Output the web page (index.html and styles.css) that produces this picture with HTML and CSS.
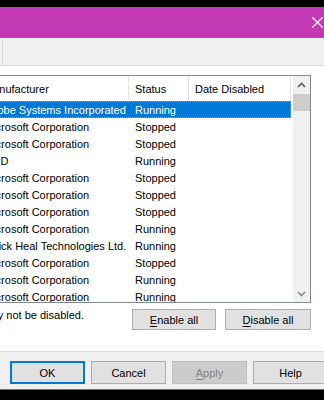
FILE: index.html
```html
<!DOCTYPE html>
<html lang="en">
<head>
  <meta charset="UTF-8">
  <title>System Configuration - Services</title>
  <link rel="stylesheet" href="styles.css">
</head>
<body>
  <div class="screen-edge"></div>

  <div class="titlebar">
    <div class="caption-btn">
      <svg width="11" height="11" viewBox="0 0 11 11">
        <path d="M0 0 L11 11 M11 0 L0 11" stroke="#ffffff" stroke-width="1.3" fill="none"/>
      </svg>
    </div>
  </div>

  <div class="dialog">
    <div class="tabs">
      <div class="tab"></div>
    </div>

    <div class="tab-page">
      <div class="service-list">
        <div class="list-view">
          <div class="list-row list-header">
            <div class="cell">Manufacturer</div>
            <div class="cell">Status</div>
            <div class="cell">Date Disabled</div>
          </div>
          <div class="list-row selected">
            <div class="cell">Adobe Systems Incorporated</div>
            <div class="cell">Running</div>
            <div class="cell"></div>
          </div>
          <div class="list-row">
            <div class="cell">Microsoft Corporation</div>
            <div class="cell">Stopped</div>
            <div class="cell"></div>
          </div>
          <div class="list-row">
            <div class="cell">Microsoft Corporation</div>
            <div class="cell">Stopped</div>
            <div class="cell"></div>
          </div>
          <div class="list-row">
            <div class="cell">AMD</div>
            <div class="cell">Running</div>
            <div class="cell"></div>
          </div>
          <div class="list-row">
            <div class="cell">Microsoft Corporation</div>
            <div class="cell">Stopped</div>
            <div class="cell"></div>
          </div>
          <div class="list-row">
            <div class="cell">Microsoft Corporation</div>
            <div class="cell">Stopped</div>
            <div class="cell"></div>
          </div>
          <div class="list-row">
            <div class="cell">Microsoft Corporation</div>
            <div class="cell">Stopped</div>
            <div class="cell"></div>
          </div>
          <div class="list-row">
            <div class="cell">Microsoft Corporation</div>
            <div class="cell">Running</div>
            <div class="cell"></div>
          </div>
          <div class="list-row">
            <div class="cell">Quick Heal Technologies Ltd.</div>
            <div class="cell">Running</div>
            <div class="cell"></div>
          </div>
          <div class="list-row">
            <div class="cell">Microsoft Corporation</div>
            <div class="cell">Stopped</div>
            <div class="cell"></div>
          </div>
          <div class="list-row">
            <div class="cell">Microsoft Corporation</div>
            <div class="cell">Running</div>
            <div class="cell"></div>
          </div>
          <div class="list-row">
            <div class="cell">Microsoft Corporation</div>
            <div class="cell">Running</div>
            <div class="cell"></div>
          </div>
        </div>

        <div class="scrollbar">
          <div class="scroll-btn">
            <svg width="9" height="6" viewBox="0 0 9 6"><path d="M1 5 L4.5 1.5 L8 5" stroke="#606060" stroke-width="1.6" fill="none"/></svg>
          </div>
          <div class="scroll-thumb"></div>
          <div class="scroll-track"></div>
          <div class="scroll-btn">
            <svg width="9" height="6" viewBox="0 0 9 6"><path d="M1 1 L4.5 4.5 L8 1" stroke="#8a8a8a" stroke-width="1.6" fill="none"/></svg>
          </div>
        </div>
      </div>

      <div class="list-footer">
        <div class="note"><span>Some Microsoft services may not be disabled.</span></div>
        <button class="btn btn-enable"><u>E</u>nable all</button>
        <button class="btn btn-disable"><u>D</u>isable all</button>
      </div>
    </div>

    <div class="actions">
      <button class="btn btn-action btn-default">OK</button>
      <button class="btn btn-action">Cancel</button>
      <button class="btn btn-action" disabled><u>A</u>pply</button>
      <button class="btn btn-action">Help</button>
    </div>
  </div>

  <div class="window-border"></div>
</body>
</html>
```

FILE: styles.css
```css
body {
  margin: 0;
  width: 324px;
  height: 400px;
  overflow: hidden;
  background-color: #000;
  font-family: 'Liberation Sans', Arial, sans-serif;
  font-size: 11px;
  color: #000;
}

.screen-edge {
  height: 7px;
  background-color: #000;
}

.titlebar {
  height: 31px;
  background-color: #c239b3;
  display: flex;
  justify-content: flex-end;
  align-items: center;
}

.caption-btn {
  width: 28px;
  height: 31px;
  display: flex;
  align-items: center;
  justify-content: flex-end;
  padding-right: 1px;
}

.caption-btn svg {
  display: block;
}

.dialog {
  height: 351px;
  background-color: #f0f0f0;
  overflow: hidden;
}

.tabs {
  height: 27px;
  display: flex;
  align-items: flex-end;
}

.tab {
  width: 2px;
  height: 25px;
  border-right: 1px solid #d9d9d9;
}

.tab-page {
  height: 276px;
  background-color: #fff;
  border-top: 1px solid #d9d9d9;
  border-bottom: 1px solid #d9d9d9;
  padding-top: 9px;
}

.service-list {
  display: flex;
  width: 339px;
  height: 226px;
  margin-left: -30px;
  border: 1px solid #828790;
  overflow: hidden;
}

.list-view {
  width: 320px;
  margin-right: 2px;
}

.list-row {
  display: grid;
  grid-template-columns: 158px 60px 102px;
  height: 17px;
  line-height: 16px;
  white-space: nowrap;
}

.list-row .cell {
  overflow: hidden;
  padding-top: 1px;
  padding-left: 6px;
}

.list-row .cell:first-child {
  padding-left: 13px;
}

.list-header {
  height: 25px;
  line-height: 24px;
}

.list-header .cell {
  border-right: 1px solid #e5e5e5;
}

.selected {
  background-color: #0078d7;
  color: #fff;
  outline: 1px dotted #ff8728;
  outline-offset: -1px;
}

.scrollbar {
  width: 17px;
  display: flex;
  flex-direction: column;
  background-color: #f0f0f0;
}

.scroll-btn {
  height: 17px;
  display: flex;
  align-items: center;
  justify-content: center;
}

.scroll-thumb {
  height: 17px;
  margin-top: 1px;
  background-color: #cdcdcd;
}

.scroll-track {
  flex-grow: 1;
}

.list-footer {
  display: flex;
  align-items: flex-start;
  margin-top: 6px;
}

.note {
  width: 84px;
  display: flex;
  justify-content: flex-end;
  overflow: hidden;
  white-space: nowrap;
  line-height: 14px;
  margin-top: -1px;
}

.btn {
  font-family: 'Liberation Sans', Arial, sans-serif;
  font-size: 11px;
  color: #000;
  background-color: #e1e1e1;
  border: 1px solid #adadad;
  padding: 0;
  margin: 0;
}

.btn u {
  text-decoration-thickness: 1px;
  text-underline-offset: 2px;
}

.btn-enable {
  width: 84px;
  height: 21px;
  margin-left: 48px;
}

.btn-disable {
  width: 86px;
  height: 21px;
  margin-left: 9px;
}

.actions {
  display: flex;
  gap: 6px;
  padding-top: 9px;
  padding-left: 10px;
}

.btn-action {
  flex-shrink: 0;
  width: 75px;
  height: 23px;
}

.btn-default {
  border: 2px solid #0078d7;
}

.btn-action:disabled {
  background-color: #cccccc;
  border-color: #bfbfbf;
  color: #838383;
}

.window-border {
  height: 1px;
  background-color: #c239b3;
}
```
